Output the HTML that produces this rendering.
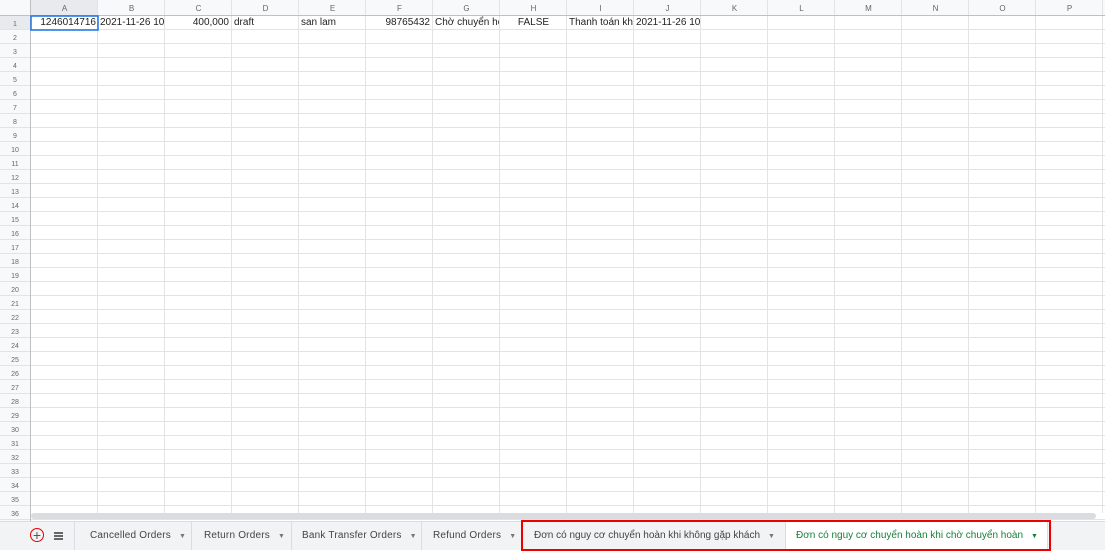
<!DOCTYPE html><html><head><meta charset="utf-8"><style>
body{margin:0;width:1105px;height:549px;overflow:hidden;background:#fff;font-family:"Liberation Sans",Arial,sans-serif;position:relative}
.g{position:absolute;left:0;top:0}
.c{position:absolute;font-size:10px;color:#222;white-space:nowrap;overflow:hidden;line-height:14px}
.tabbar{position:absolute;left:0;top:521px;width:1105px;height:28px;background:#f1f3f4;border-top:1px solid #dadce0}
.tab{position:absolute;top:0;height:28px;line-height:28px;font-size:10px;color:#444;letter-spacing:.2px;border-right:1px solid #dadce0;white-space:nowrap;box-sizing:border-box}
.tab i{font-style:normal;font-size:7px;color:#777;margin-left:8px;display:inline-block}
</style></head><body>
<svg class="g" width="1105" height="521">
<rect x="0" y="0" width="1105" height="16" fill="#f8f9fa"/>
<rect x="0" y="0" width="31" height="521" fill="#f8f9fa"/>
<rect x="31" y="0" width="67" height="16" fill="#e8eaed"/>
<rect x="0" y="16" width="31" height="14" fill="#e8eaed"/>
<g id="h" stroke="#e2e3e3" stroke-width="1"></g>
<g id="t" stroke="none" fill="#666" font-family="Liberation Sans" text-anchor="middle"></g>
<line x1="0" y1="15.5" x2="1105" y2="15.5" stroke="#c0c0c0"/>
<line x1="30.5" y1="0" x2="30.5" y2="521" stroke="#c0c0c0"/>
<rect x="31" y="16" width="67" height="14" fill="none" stroke="#1a73e8" stroke-width="1.5"/>
<rect x="31" y="513" width="1065" height="6" rx="3" fill="#dadce0"/>
</svg>
<div class="c" style="left:31px;top:16px;width:65px;text-align:right">1246014716</div>
<div class="c" style="left:100px;top:16px;width:64px">2021-11-26 10:1</div>
<div class="c" style="left:165px;top:16px;width:64px;text-align:right">400,000</div>
<div class="c" style="left:234px;top:16px">draft</div>
<div class="c" style="left:301px;top:16px">san lam</div>
<div class="c" style="left:366px;top:16px;width:64px;text-align:right">98765432</div>
<div class="c" style="left:435px;top:16px;width:64px">Chờ chuyển hoàn</div>
<div class="c" style="left:500px;top:16px;width:67px;text-align:center">FALSE</div>
<div class="c" style="left:569px;top:16px;width:64px">Thanh toán khi giao</div>
<div class="c" style="left:636px;top:16px;width:64px">2021-11-26 10:1</div>
<div class="tabbar">
<div style="position:absolute;left:30px;top:6px;width:12px;height:12px;border:1.5px solid #e00;border-radius:50%;text-align:center;line-height:12px;font-size:14px;color:#555">+</div>
<div style="position:absolute;left:54px;top:10px;width:9px;height:8px;background:repeating-linear-gradient(#666 0 2px,#f1f3f4 2px 3px)"></div>
<div class="tab" style="left:74px;width:118px;border-left:1px solid #dadce0;padding-left:15px">Cancelled Orders<i>▼</i></div>
<div class="tab" style="left:192px;width:100px;padding-left:12px">Return Orders<i>▼</i></div>
<div class="tab" style="left:292px;width:130px;padding-left:10px">Bank Transfer Orders<i>▼</i></div>
<div class="tab" style="left:422px;width:100px;padding-left:11px">Refund Orders<i>▼</i></div>
<div class="tab" style="left:522px;width:264px;padding-left:12px;letter-spacing:0">Đơn có nguy cơ chuyển hoàn khi không gặp khách<i>▼</i></div>
<div class="tab" style="left:786px;width:262px;padding-left:10px;letter-spacing:0;background:#fff;color:#188038">Đơn có nguy cơ chuyển hoàn khi chờ chuyển hoàn<i style="color:#188038">▼</i></div>
<div style="position:absolute;left:521px;top:-2px;width:526px;height:27px;border:2px solid #e00"></div>
</div>
<script>
var s='',t='',L='ABCDEFGHIJKLMNOP';
for(var i=0;i<16;i++){var x=31+i*67;s+='<line x1="'+(x+66.5)+'" y1="0" x2="'+(x+66.5)+'" y2="513"/>';
t+='<text x="'+(x+33.5)+'" y="11" font-size="8">'+L[i]+'</text>';}
for(var r=1;r<=36;r++){var y=16+(r-1)*14;s+='<line x1="0" y1="'+(y+13.5)+'" x2="1105" y2="'+(y+13.5)+'"/>';
t+='<text x="15" y="'+(y+10)+'" font-size="7">'+r+'</text>';}
document.getElementById('h').innerHTML=s;
document.getElementById('t').innerHTML=t;
</script>
</body></html>
